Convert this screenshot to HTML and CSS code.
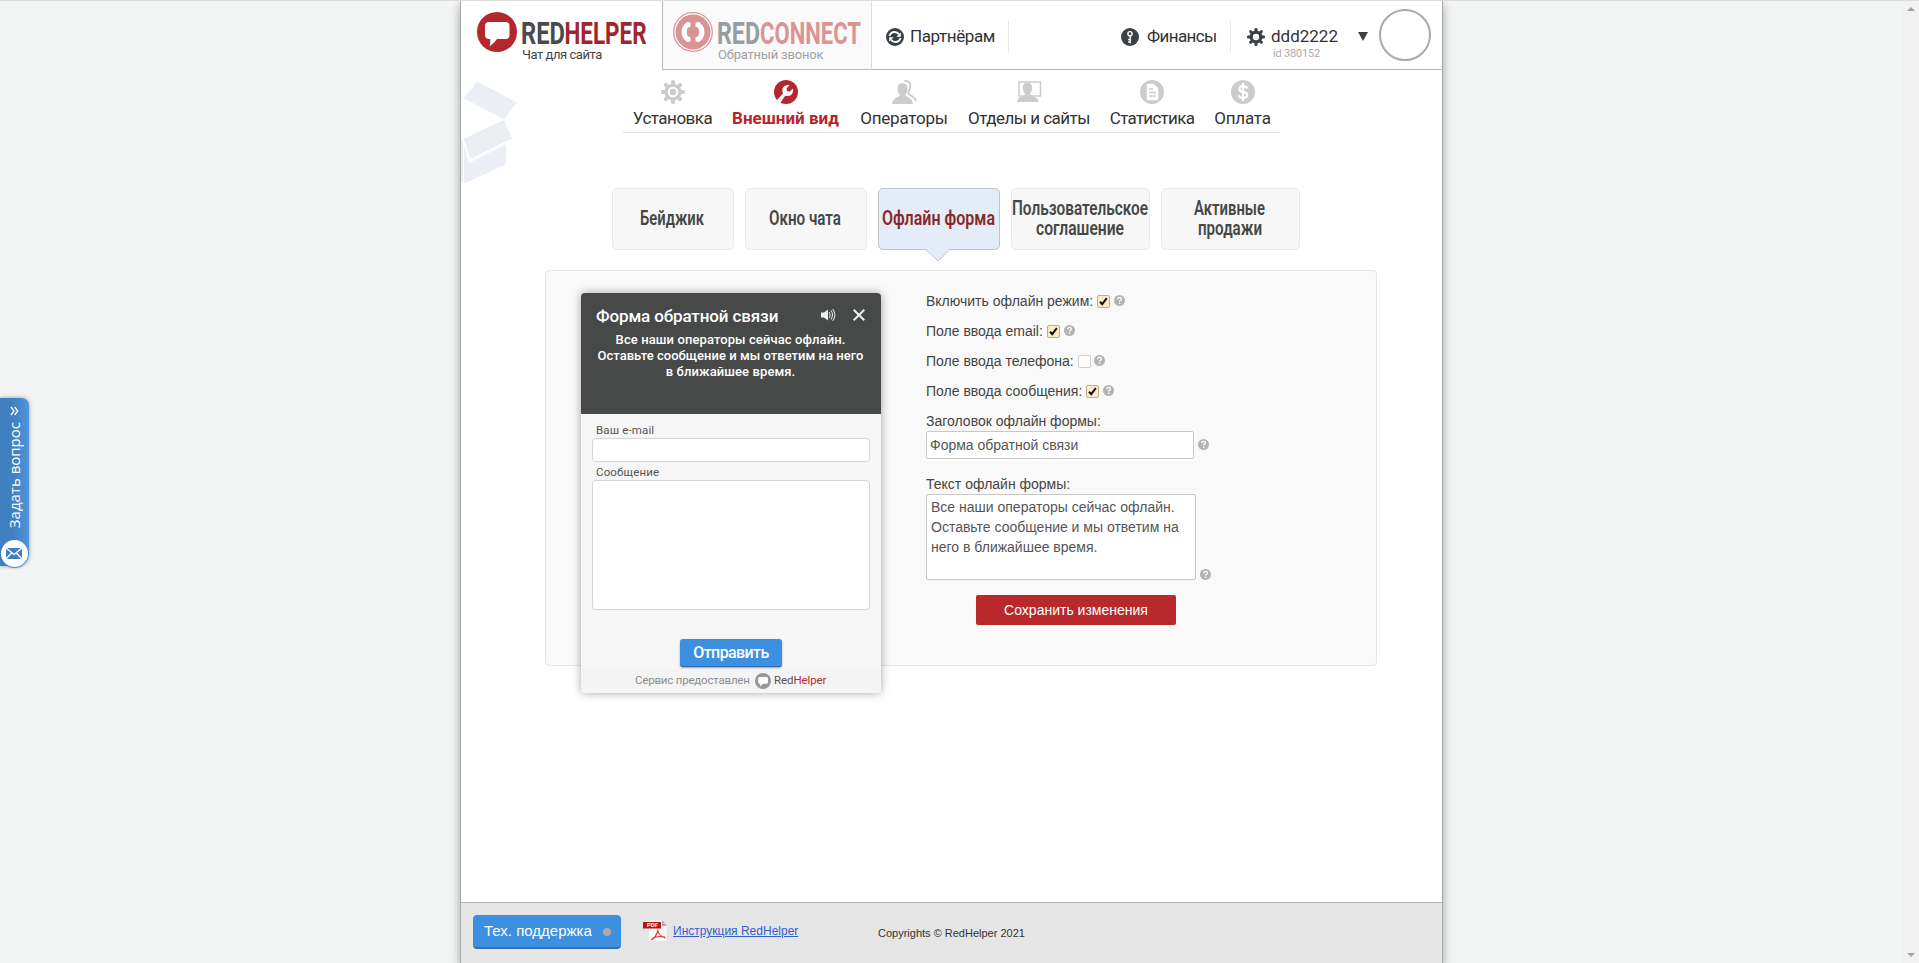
FILE: index.html
```html
<!DOCTYPE html>
<html lang="ru">
<head>
<meta charset="utf-8">
<title>RedHelper</title>
<link rel="stylesheet" href="styles.css">
</head>
<body>
<svg class="defs" width="0" height="0">
  <defs>
    <symbol id="bubble" viewBox="0 0 40 40">
      <circle cx="20" cy="20" r="20" fill="currentColor"/>
      <path d="M12 10h16.500q4 0 4 4v9q0 4-4 4h-8.500q-2 3-7.500 7.500 1.200-4 .7-7.500h-1.200q-4 0-4-4v-9q0-4 4-4z" fill="#fff"/>
    </symbol>
    <symbol id="gear" viewBox="0 0 24 24">
      <g fill="currentColor">
        <rect x="10" y="0" width="4" height="24" rx="1.600"/><rect x="10" y="0" width="4" height="24" rx="1.600" transform="rotate(45 12 12)"/><rect x="10" y="0" width="4" height="24" rx="1.600" transform="rotate(90 12 12)"/><rect x="10" y="0" width="4" height="24" rx="1.600" transform="rotate(135 12 12)"/>
        <circle cx="12" cy="12" r="8.600"/>
      </g>
    </symbol>
    <symbol id="help" viewBox="0 0 11 11">
      <circle cx="5.500" cy="5.500" r="5.500" fill="#b3b3b3"/>
      <path d="M3.700 4.300q0-1.900 1.900-1.900 1.800 0 1.800 1.500 0 1-1.100 1.500-.7.300-.7 1.200M5.600 7.600v1.300" fill="none" stroke="#fff" stroke-width="1.300"/>
    </symbol>
    <symbol id="tick" viewBox="0 0 11 11">
      <path d="M2 5.800l2.200 2.400 4.600-6" fill="none" stroke="#111" stroke-width="2"/>
    </symbol>
  </defs>
</svg>

<div class="viewport">
<div class="page">
  <header class="top">
    <div class="brand brand-helper">
      <svg class="mark red" width="40" height="40"><use href="#bubble"/></svg>
      <div class="brand-text">
        <svg class="word" width="126" height="28"><text x="-1" y="25" font-size="31" fill="#4a4c4c" textLength="44" lengthAdjust="spacingAndGlyphs">RED</text><text x="42.500" y="25" font-size="31" fill="#a0262c" textLength="82" lengthAdjust="spacingAndGlyphs">HELPER</text></svg>
        <span class="slogan slogan-helper">Чат для сайта</span>
      </div>
    </div>
    <div class="brand brand-connect">
      <svg class="mark" width="40" height="40" viewBox="0 0 40 40">
        <circle cx="20" cy="20" r="19.300" fill="#fff" stroke="#d99495" stroke-width="1.300"/>
        <circle cx="20" cy="20" r="17.500" fill="#d99495"/>
        <path id="handset" d="M17.500 10.500L14 10q-5.500 4-5.500 10T14 30l3.500-.5V25.500L14.500 24q-1.600-4 0-8l3-1.500z" fill="#fff"/>
        <use href="#handset" transform="matrix(-1 0 0 1 40 0)"/>
      </svg>
      <div class="brand-text">
        <svg class="word" width="146" height="28"><text x="-1" y="25" font-size="31" fill="#999d9f" textLength="43" lengthAdjust="spacingAndGlyphs">RED</text><text x="42" y="25" font-size="31" fill="#d99495" textLength="101" lengthAdjust="spacingAndGlyphs">CONNECT</text></svg>
        <span class="slogan slogan-connect">Обратный звонок</span>
      </div>
    </div>
    <div class="tools">
      <a class="tool tool-partners">
        <svg width="18" height="18" viewBox="0 0 18 18"><circle cx="9" cy="9" r="9" fill="#394145"/><path d="M3.500 8q1.200-4 5-4 3 0 4.500 2.300M14.500 10q-1.200 4-5 4-3 0-4.500-2.300" fill="none" stroke="#fff" stroke-width="1.900"/><path d="M14.800 4.500v4.300h-4.500zM3.200 13.500V9.200h4.500z" fill="#fff"/></svg>
        <span>Партнёрам</span>
      </a>
      <a class="tool tool-finance">
        <svg width="18" height="18" viewBox="0 0 18 18"><circle cx="9" cy="9" r="9" fill="#394145"/><circle cx="9" cy="5.700" r="2.100" fill="none" stroke="#fff" stroke-width="1.400"/><path d="M9.200 7.800v7.400M9 11.500H7.200M9 14H7.200" stroke="#fff" stroke-width="1.400"/></svg>
        <span>Финансы</span>
      </a>
      <div class="tool tool-user">
        <svg class="dark" width="18" height="18" viewBox="0 0 24 24"><use href="#gear" width="24" height="24"/><circle cx="12" cy="12" r="4.300" fill="#fff"/></svg>
        <div class="user"><span>ddd2222</span><small>id 380152</small></div>
        <svg class="caret" width="10" height="9"><path d="M0 0h10L5 9z" fill="#394145"/></svg>
      </div>
      <div class="avatar"></div>
    </div>
  </header>

  <svg class="box-art" width="56" height="104" viewBox="18 34 168 312"><path fill="#ebeef4" d="M67 36l119 62-39 51L26 86zM147 151l24 55-125 62-20-61zM26 224l17 55 110-55v59L27 342zM18 207l6 8v125l-6-2zM18 80l4 6-4 6z"/></svg>

  <nav class="menu">
    <a class="w98"><svg width="24" height="24" viewBox="0 0 24 24"><use href="#gear" width="24" height="24"/><circle cx="12" cy="12" r="4.300" fill="none" stroke="#fff" stroke-width="2"/></svg><span class="m1">Установка</span></a>
    <a class="w127 active"><svg width="24" height="24" viewBox="0 0 24 24"><circle cx="12" cy="12" r="12" fill="currentColor"/><path d="M1.500 21.500L9 13.500Q7 8.500 10.500 6q2.500-1.600 5-.8L12.500 8.500l.6 2.600 2.600.6 3.300-3.300q1 3-1 5.500-2.700 3-6.800 1.900L5.500 24z" fill="#fff"/></svg><span>Внешний вид</span></a>
    <a class="w108"><svg width="24" height="24" viewBox="0 0 24 24"><path d="M10.500 3q5 0 5 6 0 3.500-2 5.500v1.500q6.500 2 7.500 8H0q.5-4 3-5.500l4.500-2.500v-1.500q-2-2-2-5.500 0-6 5-6z" fill="currentColor"/><path d="M12 1.200q6-1.600 6.300 4 .1 4-1.800 6.800v2l4 2.500q3 2 3.500 4.500" fill="none" stroke="currentColor" stroke-width="1.800"/></svg><span class="m3">Операторы</span></a>
    <a class="w141"><svg width="24" height="24" viewBox="0 0 24 24"><rect x="2" y="2" width="21.500" height="14" fill="none" stroke="currentColor" stroke-width="1.500"/><path d="M10.500 2.500q4.700 0 4.700 5.500 0 3-2 5.200v2l5 2q3 1.300 3.300 4.800H0q.3-3.500 3-4.800l4.800-2v-2q-2-2.200-2-5.200 0-5.500 4.700-5.500z" fill="currentColor"/></svg><span class="m4">Отделы и сайты</span></a>
    <a class="w105"><svg width="24" height="24" viewBox="0 0 24 24"><circle cx="12" cy="12" r="12" fill="currentColor"/><path d="M7.500 4.500h6l4 4v11h-10z" fill="#fff" stroke="#fff" stroke-linejoin="round" stroke-width="1.500"/><path d="M9 9h4M9 12.500h7M9 16h7" stroke="currentColor" stroke-width="1.600"/></svg><span class="m5">Статистика</span></a>
    <a class="w78"><svg width="24" height="24" viewBox="0 0 24 24"><circle cx="12" cy="12" r="12" fill="currentColor"/><path d="M16.200 8.500q-.9-2.400-4.200-2.400-3.700 0-3.700 2.800 0 2.300 3.700 3 4.200.8 4.200 3.200 0 2.900-4.200 2.900-3.500 0-4.300-2.600M12 3v18" fill="none" stroke="#fff" stroke-width="2.200"/></svg><span class="m6">Оплата</span></a>
  </nav>

  <div class="tabs">
    <a class="tab"><svg width="66" height="60"><text x="0" y="36" textLength="64" lengthAdjust="spacingAndGlyphs">Бейджик</text></svg></a>
    <a class="tab"><svg width="74" height="60"><text x="0" y="36" textLength="72" lengthAdjust="spacingAndGlyphs">Окно чата</text></svg></a>
    <a class="tab current"><svg width="114" height="60"><text x="0" y="36" textLength="113" lengthAdjust="spacingAndGlyphs">Офлайн форма</text></svg>
      <svg class="pointer" width="24" height="13"><path d="M0 0h24L12 12z" fill="#e4ecf7"/><path d="M0 .5L12 12 24 .5" fill="none" stroke="#bfc2c6"/></svg></a>
    <a class="tab wide"><svg width="137" height="60"><text x="0" y="26" textLength="136" lengthAdjust="spacingAndGlyphs">Пользовательское</text><text x="24" y="46" textLength="88" lengthAdjust="spacingAndGlyphs">соглашение</text></svg></a>
    <a class="tab wide"><svg width="74" height="60"><text x="0" y="26" textLength="71" lengthAdjust="spacingAndGlyphs">Активные</text><text x="4" y="46" textLength="64" lengthAdjust="spacingAndGlyphs">продажи</text></svg></a>
  </div>

  <main class="panel">
    <section class="widget">
      <div class="widget-head">
        <div class="widget-title">
          <span>Форма обратной связи</span>
          <svg class="sound" width="15" height="14" viewBox="0 0 15 14"><path d="M0 4.500h3L7 1.500v11L3 9.500H0z" fill="#eee"/><path d="M8.300 4q1.700 3 0 6M10 2.500q3 4.500 0 9M11.700 1q4.300 6 0 12" fill="none" stroke="#ddd" stroke-width="1.100"/></svg>
          <svg class="close" width="12" height="12" viewBox="0 0 12 12"><path d="M.7.700l10.600 10.600M11.300.700L.7 11.300" stroke="#eee" stroke-width="2"/></svg>
        </div>
        <p><span class="p1">Все наши операторы сейчас офлайн.</span><br><span class="p2">Оставьте сообщение и мы ответим на него</span><br><span class="p3">в ближайшее время.</span></p>
      </div>
      <div class="widget-body">
        <label>Ваш e-mail</label>
        <div class="field"></div>
        <label>Сообщение</label>
        <div class="field area"></div>
        <div class="send"><span>Отправить</span></div>
      </div>
      <div class="widget-foot">
        <span class="f1">Сервис предоставлен</span>
        <svg class="grey" width="16" height="16"><use href="#bubble"/></svg>
        <span class="f2">Red<b>Helper</b></span>
      </div>
    </section>

    <section class="options">
      <div class="row"><span>Включить офлайн режим:</span><i class="check on"><svg width="11" height="11"><use href="#tick"/></svg></i><svg class="hint" width="11" height="11"><use href="#help"/></svg></div>
      <div class="row"><span>Поле ввода email:</span><i class="check on"><svg width="11" height="11"><use href="#tick"/></svg></i><svg class="hint" width="11" height="11"><use href="#help"/></svg></div>
      <div class="row"><span>Поле ввода телефона:</span><i class="check"></i><svg class="hint near" width="11" height="11"><use href="#help"/></svg></div>
      <div class="row"><span>Поле ввода сообщения:</span><i class="check on"><svg width="11" height="11"><use href="#tick"/></svg></i><svg class="hint" width="11" height="11"><use href="#help"/></svg></div>
      <div class="caption">Заголовок офлайн формы:</div>
      <div class="line"><div class="text-input">Форма обратной связи</div><svg class="hint" width="11" height="11"><use href="#help"/></svg></div>
      <div class="caption second">Текст офлайн формы:</div>
      <div class="line end"><div class="text-area">Все наши операторы сейчас офлайн.<br>Оставьте сообщение и мы ответим на<br>него в ближайшее время.</div><svg class="hint" width="11" height="11"><use href="#help"/></svg></div>
      <div class="save">Сохранить изменения</div>
    </section>
  </main>

  <footer class="bottom">
    <a class="support"><span>Тех. поддержка</span><i></i></a>
    <svg class="pdf" width="24" height="22" viewBox="0 0 24 22"><path d="M6 .5h13l4.500 5v15.500H6z" fill="#f8f8f8"/><path d="M19 0v6h5z" fill="#aaa"/><rect x="0" y="2" width="18" height="6.500" fill="#b81414"/><text x="4" y="7.300" font-size="5.500" font-weight="700" fill="#fff" font-family="Liberation Sans, sans-serif">PDF</text><path d="M8 20q5-2 7-10M14.500 9.500q1.500 7 8 8.500M9 18.500q6-3 13-1.500" fill="none" stroke="#d33" stroke-width="1.100"/></svg>
    <a class="manual">Инструкция RedHelper</a>
    <span class="copy">Copyrights © RedHelper 2021</span>
  </footer>
</div>
</div>

<aside class="ask">
  <svg width="9" height="8" viewBox="0 0 9 8"><path d="M.5 7.500L4.500 4.500l4 3M.5 3.800L4.500.8l4 3" fill="none" stroke="#fff" stroke-width="1.300" transform="rotate(90 4.500 4)"/></svg>
  <span>Задать вопрос</span>
  <i><svg width="16" height="11" viewBox="0 0 16 11"><rect width="16" height="11" fill="#4080c2"/><path d="M0 0l8 6.500L16 0M0 11l5.500-6M16 11l-5.500-6" fill="none" stroke="#fff" stroke-width="1.300"/></svg></i>
</aside>
<div class="scrollbar"><svg width="8" height="4"><path d="M0 4l4-4 4 4z" fill="#a3a3a3"/></svg><svg width="8" height="4"><path d="M0 0l4 4 4-4z" fill="#a3a3a3"/></svg></div>
</body>
</html>
```
FILE: styles.css
```css
* { box-sizing: border-box; }
html, body { margin: 0; height: 963px; overflow: hidden; }
body {
  background: #f3f5f5;
  border-top: 1px solid #dcdcdc;
  font-family: Roboto, "Noto Sans", sans-serif;
  color: #333;
}
svg { display: block; flex: none; overflow: visible; }
.defs { position: absolute; }
.viewport { width: 1903px; height: 962px; overflow: hidden; }
.page {
  position: relative;
  display: flex;
  flex-direction: column;
  width: 983px;
  height: 962px;
  margin-left: 460px;
  background: #fff;
  border: solid #a9abab;
  border-width: 0 1px;
  box-shadow: 0 4px 9px rgba(0, 0, 0, .35);
}
.red { color: #b3282d; }
.grey { color: #95999c; }
.dark { color: #394145; }

/* header */
.top { display: flex; height: 69px; }
.brand { display: flex; height: 69px; padding-top: 11px; }
.brand-helper { width: 201px; padding-left: 16px; }
.brand-connect { width: 210px; padding-left: 10px; background: #fafafa; border: solid #b7b7b7; border-width: 0 1px 1px; border-right-color: #ddd; }
.brand-text { margin: 6px 0 0 5px; }
.word { font-family: "Liberation Sans Narrow", Roboto, sans-serif; font-weight: 700; margin-top: 1px; }
.slogan { display: block; font-size: 13px; line-height: 15px; white-space: nowrap; }
.slogan-helper { color: #454545; letter-spacing: -.45px; }
.slogan-connect { color: #a0a0a0; letter-spacing: -.2px; }
.tools { display: flex; flex: 1; border-bottom: 1px solid #b7b7b7; }
.tool { display: flex; height: 31px; margin-top: 20px; padding-top: 7px; font-size: 17px; line-height: 17px; white-space: nowrap; }
.tool-partners { width: 137px; padding-left: 14px; gap: 6px; border-right: 1px solid #e6e6e6; letter-spacing: -.4px; }
.tool-finance { width: 110px; margin-left: 112px; gap: 8px; border-right: 1px solid #e6e6e6; letter-spacing: -.6px; }
.tool-user { width: 148px; padding-left: 16px; gap: 6px; }
.user { width: 81px; }
.user span, .user small { display: block; }
.user small { margin: 3px 0 0 2px; font-size: 11px; line-height: 11px; letter-spacing: -.2px; color: #b3a6aa; }
.caret { margin-top: 4px; }
.avatar { width: 52px; height: 52px; margin-top: 8px; border: 2px solid #aaa; border-radius: 50%; }

.box-art { position: absolute; left: 0; top: 80px; }

/* main menu */
.menu { display: flex; width: 657px; height: 63px; margin: 0 0 0 162px; border-bottom: 1px solid #e1e2e2; }
.menu a { display: flex; flex-direction: column; align-items: center; padding-top: 10px; color: #ccc; }
.menu span { margin-top: 4px; font-size: 17px; line-height: 20px; color: #333; white-space: nowrap; }
.menu .active { color: #b3282d; }
.menu .active span { color: #b7242a; font-weight: 700; }
.m1 { letter-spacing: -.5px; }
.m3 { letter-spacing: -.2px; }
.m4 { letter-spacing: -.52px; }
.m5 { letter-spacing: -.72px; }
.m6 { letter-spacing: -.2px; }
.w98 { width: 99px; } .w127 { width: 127px; } .w108 { width: 110px; }
.w141 { width: 140px; } .w105 { width: 106px; } .w78 { width: 75px; }

/* section tabs */
.tabs { display: flex; gap: 11px; margin: 55px 0 0 151px; }
.tab { position: relative; display: flex; justify-content: center; width: 122px; height: 62px; background: #f7f7f7; border: 1px solid #e9e9e9; border-radius: 5px; }
.tab.wide { width: 139px; }
.tab text { font: 600 19.500px "Liberation Sans Narrow", Roboto, sans-serif; fill: #444746; }
.tab.current { background: #e4ecf7; border-color: #bfc2c6; }
.tab.current text { fill: #87292c; }
.pointer { position: absolute; left: 47px; top: 60px; }

/* content panel */
.panel { display: flex; width: 832px; height: 396px; margin: 20px 0 0 84px; padding: 22px 0 0 35px; background: #f9f9f9; border: 1px solid #e4e4e4; border-radius: 4px; }
.widget { width: 300px; height: 400px; background: #f6f6f6; border-radius: 4px; box-shadow: 0 0 10px rgba(0, 0, 0, .35); overflow: hidden; flex: none; }
.widget-head { height: 121px; padding: 15px 16px 0 15px; background: #474948; color: #fff; }
.widget-title { display: flex; height: 24px; font-size: 17px; line-height: 17px; font-weight: 500; white-space: nowrap; }
.widget-title span { width: 225px; letter-spacing: -.12px; }
.widget-title .sound { margin-right: 17px; }
.widget-title .close { margin-top: 1px; }
.widget-head p { margin: 0 -10px; font-size: 13px; line-height: 16px; font-weight: 500; text-align: center; white-space: nowrap; }
.p1 { letter-spacing: .1px; }
.p2 { letter-spacing: .03px; }
.p3 { letter-spacing: .1px; }
.widget-body { height: 255px; padding: 10px 11px 0; }
.widget-body label { display: block; height: 14px; padding-left: 4px; font-size: 11.500px; line-height: 13px; letter-spacing: .15px; color: #555; }
.field { height: 24px; margin-bottom: 4px; background: #fff; border: 1px solid #d5d5d5; border-radius: 4px; }
.field.area { height: 130px; margin: 0 0 29px; }
.send { width: 102px; height: 28px; margin: auto; background: #3d8fdf; border-bottom: 1px solid #2a68ab; border-radius: 3px; box-shadow: 0 1px 2px rgba(0, 0, 0, .35); font-size: 16px; line-height: 27px; font-weight: 500; letter-spacing: -.6px; color: #fff; text-align: center; }
.widget-foot { display: flex; height: 24px; padding: 4px 0 0 54px; background: #f4f4f4; font-size: 11.500px; line-height: 15px; color: #8d8d8d; white-space: nowrap; }
.f1 { width: 120px; letter-spacing: -.2px; }
.f2 { margin-left: 3px; letter-spacing: -.1px; color: #555; }
.f2 b { color: #b92b30; font-weight: 400; }

.options { margin-left: 45px; font: 14px/20px "Liberation Sans", Arial, sans-serif; color: #444; }
.row { display: flex; height: 20px; margin-bottom: 10px; }
.row:first-child { margin-top: -2px; }
.check { width: 13px; height: 13px; margin: 4px 0 0 4px; background: #fff; border: 1px solid #ccc; border-radius: 2px; }
.check.on { background: #fbebc5; border-color: #bcae8e; }
.hint { margin: 4px 0 0 4px; }
.near { margin-left: 3px; }
.line { display: flex; }
.line .hint { margin-top: 8px; }
.line.end { align-items: flex-end; }
.caption { height: 20px; }
.text-input { width: 268px; height: 28px; padding: 3px; background: #fff; border: 1px solid #c8c8c8; border-radius: 2px; color: #555; }
.caption.second { margin-top: 15px; }
.text-area { width: 270px; height: 86px; padding: 2px 4px; background: #fff; border: 1px solid #c8c8c8; border-radius: 2px; color: #555; white-space: nowrap; }
.save { width: 200px; height: 30px; margin: 15px 0 0 50px; background: #b9282b; border-radius: 2px; line-height: 30px; text-align: center; color: #fff; }

/* footer */
.bottom { display: flex; height: 61px; margin-top: auto; padding-left: 12px; background: #e5e5e5; border-top: 1px solid #b5b5b5; font-family: "Liberation Sans", Arial, sans-serif; }
.support { display: flex; width: 148px; height: 34px; margin-top: 12px; padding-left: 11px; background: #3d8fdf; border-bottom: 2px solid #2f6fba; border-radius: 4px; font-size: 15px; line-height: 32px; color: #fff; white-space: nowrap; }
.support span { width: 119px; }
.support i { width: 8px; height: 8px; margin-top: 13px; border-radius: 50%; background: #aaa; }
.pdf { margin: 17px 6px 0 22px; }
.manual { width: 205px; margin-top: 20px; font-size: 12px; line-height: 16px; color: #3560d0; text-decoration: underline; }
.copy { margin-top: 23px; font-size: 11px; line-height: 14px; }

/* floating question tab */
.ask { position: absolute; left: 0; top: 398px; display: flex; flex-direction: column; align-items: center; width: 29px; height: 168px; padding-top: 9px; background: linear-gradient(90deg, #4080c2, #4080c2 45%, #5196dc); border-radius: 0 7px 12px 0; box-shadow: 0 0 4px rgba(0, 0, 0, .4); }
.ask span { height: 108px; margin: 7px 2px 0 0; writing-mode: vertical-rl; transform: rotate(180deg); font: 15px/18px "Open Sans", sans-serif; color: #fff; white-space: nowrap; }
.ask i { display: flex; align-items: center; justify-content: center; width: 27px; height: 27px; margin: 12px 1px 0 0; flex: none; border-radius: 50%; background: #fff; box-shadow: 0 1px 1px #4080c2; }
.scrollbar { position: absolute; right: 0; top: 1px; display: flex; flex-direction: column; justify-content: space-between; align-items: center; width: 16px; height: 962px; padding: 6px 0; background: #f1f1f1; }
```
